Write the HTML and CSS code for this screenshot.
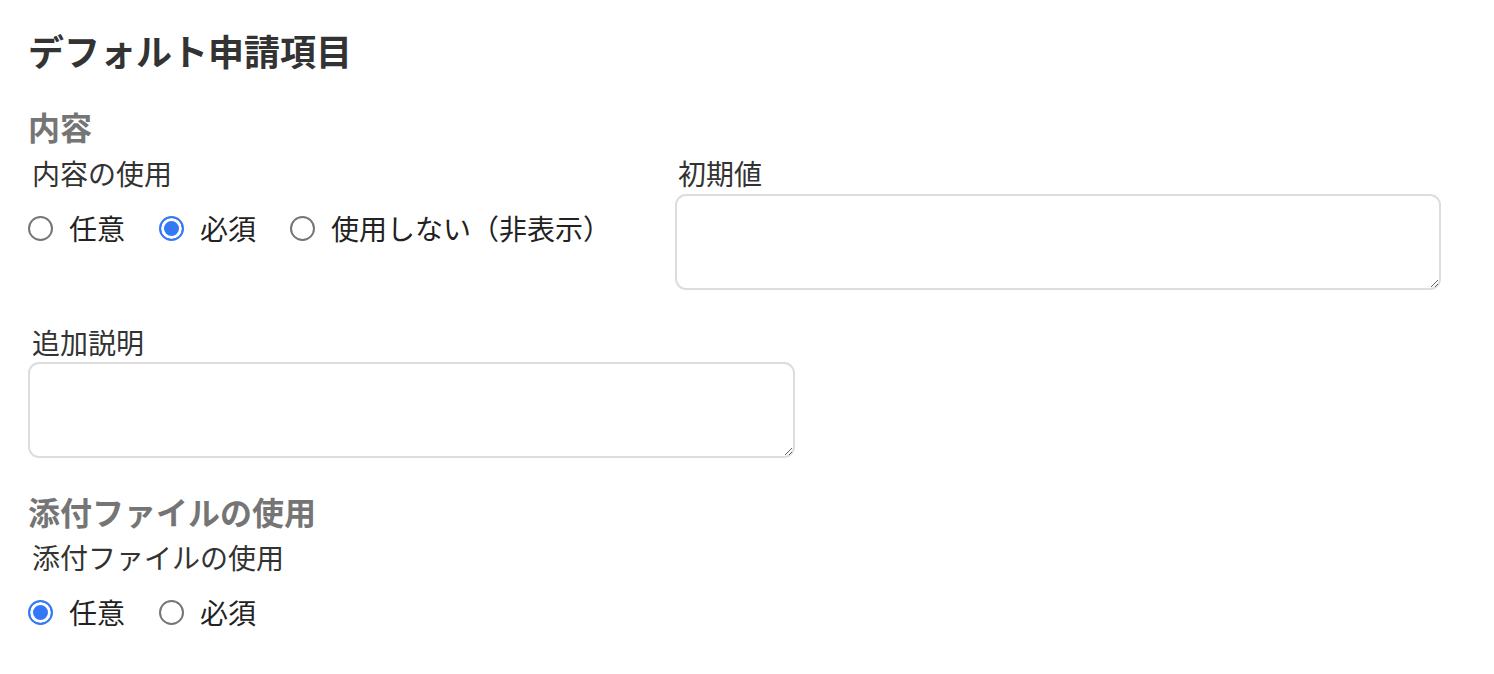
FILE: index.html
```html
<!DOCTYPE html>
<html lang="ja">
<head>
    <meta charset="UTF-8">
    <meta name="viewport" content="width=device-width, initial-scale=1.0">
    <title>デフォルト申請項目</title>
    <link rel="stylesheet" href="styles.css">
</head>
<body>

    <h1 class="page-title">デフォルト申請項目</h1>

    <!-- 内容 -->
    <section class="group">
        <h2 class="group-title">内容</h2>
        <div class="row">
            <div class="field field-left">
                <div class="field-label">内容の使用</div>
                <div class="radio-group">
                    <label class="radio"><input type="radio" name="content"> 任意</label>
                    <label class="radio"><input type="radio" name="content" checked> 必須</label>
                    <label class="radio"><input type="radio" name="content"> 使用しない（非表示）</label>
                </div>
            </div>
            <div class="field field-right">
                <label class="field-label" for="initial">初期値</label>
                <textarea id="initial" rows="2"></textarea>
            </div>
        </div>
        <div class="field field-note">
            <label class="field-label" for="note">追加説明</label>
            <textarea id="note" rows="2"></textarea>
        </div>
    </section>

    <!-- 添付ファイルの使用 -->
    <section class="group group-attach">
        <h2 class="group-title">添付ファイルの使用</h2>
        <div class="field">
            <div class="field-label">添付ファイルの使用</div>
            <div class="radio-group">
                <label class="radio"><input type="radio" name="attach" checked> 任意</label>
                <label class="radio"><input type="radio" name="attach"> 必須</label>
            </div>
        </div>
    </section>

</body>
</html>
```

FILE: styles.css
```css
body {
    font-family: "Noto Sans CJK JP", "Noto Sans", sans-serif;
    margin: 0;
    padding: 24px 28px;
    color: #333;
    background-color: #fff;
}

.page-title {
    font-size: 36px;
    font-weight: bold;
    line-height: 52px;
    margin: 0 0 30px;
    color: #333;
}

.group-title {
    font-size: 32px;
    font-weight: bold;
    line-height: 40px;
    margin: 0 0 9px;
    color: #757575;
}

.group-attach {
    margin-top: 33px;
}

.group-attach .group-title {
    margin-bottom: 8px;
}

.row {
    display: flex;
}

.field {
    display: flex;
    flex-direction: column;
}

.field-left {
    width: 647px;
}

.field-right {
    width: 766px;
}

.field-note {
    margin-top: 34px;
    width: 767px;
}

.field-label {
    font-size: 28px;
    line-height: 36px;
    color: #333;
    padding-left: 4px;
    margin-bottom: 3px;
}

.field-left .field-label,
.group-attach .field-label {
    margin-bottom: 17px;
}

.field-right .field-label {
    padding-left: 3px;
}

.field-note .field-label {
    margin-bottom: 2px;
}

.radio-group {
    display: flex;
    gap: 34px;
}

.radio {
    display: flex;
    align-items: center;
    gap: 16px;
    font-size: 28px;
    line-height: 40px;
    color: #222;
    cursor: pointer;
}

.radio input {
    appearance: none;
    width: 25px;
    height: 25px;
    margin: 0;
    border: 2px solid #767676;
    border-radius: 50%;
    background-color: #fff;
    box-sizing: border-box;
}

.radio input:checked {
    border: 2px solid #3478f6;
    background-color: #3478f6;
    box-shadow: inset 0 0 0 3px #fff;
}

textarea {
    height: 96px;
    width: 100%;
    box-sizing: border-box;
    border: 2px solid #ddd;
    border-radius: 11px;
    padding: 8px 12px;
    font-family: inherit;
    font-size: 24px;
    resize: vertical;
    outline: none;
}
```
